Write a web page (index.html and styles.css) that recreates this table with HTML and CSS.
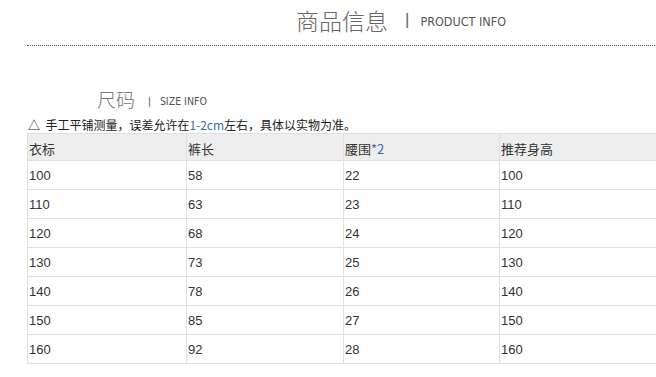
FILE: index.html
```html
<!DOCTYPE html>
<html>
<head>
<meta charset="utf-8">
<link rel="stylesheet" href="styles.css">
</head>
<body>
<div class="page">
  <div class="head">
    <span class="head-cn">商品信息</span>
    <span class="head-bar">|</span>
    <span class="head-en">PRODUCT INFO</span>
  </div>
  <div class="dots"></div>
  <div class="sub">
    <span class="sub-cn">尺码</span>
    <span class="sub-bar">|</span>
    <span class="sub-en">SIZE INFO</span>
  </div>
  <div class="note">△&nbsp; 手工平铺测量，误差允许在<span class="blue">1-2cm</span>左右，具体以实物为准。</div>
  <table class="size">
    <colgroup><col class="c1"><col class="c2"><col class="c3"><col class="c4"></colgroup>
    <thead>
      <tr><th>衣标</th><th>裤长</th><th>腰围<span class="blue">*2</span></th><th>推荐身高</th></tr>
    </thead>
    <tbody>
      <tr><td>100</td><td>58</td><td>22</td><td>100</td></tr>
      <tr><td>110</td><td>63</td><td>23</td><td>110</td></tr>
      <tr><td>120</td><td>68</td><td>24</td><td>120</td></tr>
      <tr><td>130</td><td>73</td><td>25</td><td>130</td></tr>
      <tr><td>140</td><td>78</td><td>26</td><td>140</td></tr>
      <tr><td>150</td><td>85</td><td>27</td><td>150</td></tr>
      <tr><td>160</td><td>92</td><td>28</td><td>160</td></tr>
    </tbody>
  </table>
</div>
</body>
</html>
```
FILE: styles.css
```css
html, body { margin: 0; padding: 0; background: #fff; }
body { font-family: "Liberation Sans", "Noto Sans CJK SC", sans-serif; color: #333; overflow: hidden; }
.page { width: 680px; padding-left: 27px; }
.head { display: flex; align-items: center; height: 40px; padding-left: 269px; }
.head-cn { font-family: "Noto Sans CJK SC", sans-serif; font-weight: 300; font-size: 23px; color: #666; line-height: 40px; }
.head-bar { font-size: 17px; color: #666; margin-left: 17px; margin-right: 11px; }
.head-en { font-family: "DejaVu Sans Condensed", "DejaVu Sans", sans-serif; font-size: 12.5px; color: #555; padding-top: 2px; }
.dots { height: 0; border-top: 1px dotted #555; margin-top: 5px; width: 640px; }
.sub { display: flex; align-items: center; height: 30px; margin-top: 37px; padding-left: 70px; }
.sub-cn { font-family: "Noto Sans CJK SC", sans-serif; font-weight: 300; font-size: 19px; color: #777; }
.sub-bar { font-size: 11px; color: #666; margin-left: 13px; margin-right: 9px; padding-top: 5px; }
.sub-en { font-family: "DejaVu Sans Condensed", "DejaVu Sans", sans-serif; font-size: 10.5px; color: #555; padding-top: 5px; }
.note { font-family: "Noto Sans CJK SC", sans-serif; font-size: 12px; line-height: 16px; margin-top: 4px; height: 16px; color: #222; padding-left: 1px; }
.blue { color: #3b6aa8; }
.size { border-collapse: collapse; table-layout: fixed; width: 640px; font-size: 13px; }
.c1 { width: 159px; } .c2 { width: 157px; } .c3 { width: 156px; } .c4 { width: 168px; }
.size th, .size td { border: 1px solid #e0e0e0; padding: 0 0 0 1px; text-align: left; font-weight: normal; color: #333; white-space: nowrap; }
.size th { background: #eeeeee; height: 24px; font-family: "Noto Sans CJK SC", sans-serif; font-size: 13px; padding-top: 2px; }
.size td { height: 27px; padding-top: 1px; }
```
